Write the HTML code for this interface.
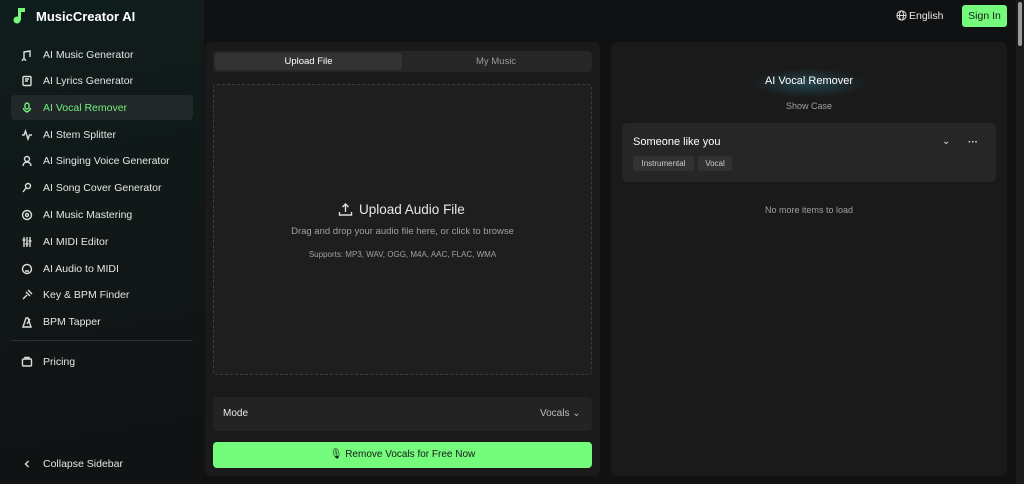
<!DOCTYPE html><html><head><style>
*{margin:0;padding:0;box-sizing:border-box}
body{width:1024px;height:484px;overflow:hidden;background:#101112;font-family:"Liberation Sans",sans-serif;color:#e8e8e8;position:relative}
.side{position:absolute;left:0;top:0;width:204px;height:484px;background:linear-gradient(170deg,#0f1d1c 0%,#111717 50%,#101213 100%)}
.abs{position:absolute}
.nav{position:absolute;left:11px;width:182px;height:25px;font-size:10.5px;color:#e6e6e6;display:flex;align-items:center;padding-left:10px}
.nav svg{width:12px;height:12px;margin-right:10px;stroke:#ddd;fill:none;stroke-width:1.4}
.nav.act{background:#222829;border-radius:4px;color:#6ef07a}
.nav.act svg{stroke:#6ef07a}
.panel{position:absolute;background:#1a1a1a;border-radius:6px}
</style></head><body>
<div class="side"></div>
<svg class="abs" style="left:12px;top:6px" width="16" height="18" viewBox="0 0 16 18"><path d="M6 14V2h7v4H9v8" fill="#74fb7c"/><circle cx="5" cy="14" r="3.5" fill="#74fb7c"/></svg>
<div class="abs" style="left:36px;top:9px;font-size:13px;font-weight:bold;color:#fff">MusicCreator AI</div>
<div class="nav" style="top:42px"><svg viewBox="0 0 12 12"><path d="M3 10V3l6-1v6M3 10a1.5 1.5 0 1 1-.1 0M9 8"/></svg>AI Music Generator</div>
<div class="nav" style="top:68px"><svg viewBox="0 0 12 12"><rect x="2" y="1.5" width="8" height="9" rx="1"/><path d="M4 4h4M4 6h3"/></svg>AI Lyrics Generator</div>
<div class="nav act" style="top:95px"><svg viewBox="0 0 12 12"><rect x="4" y="1" width="4" height="6" rx="2"/><path d="M2.5 6a3.5 3.5 0 0 0 7 0M6 9.5v1.5"/></svg>AI Vocal Remover</div>
<div class="nav" style="top:122px"><svg viewBox="0 0 12 12"><path d="M1 6h2l1.5-4 2.5 8 1.5-4H11"/></svg>AI Stem Splitter</div>
<div class="nav" style="top:148px"><svg viewBox="0 0 12 12"><circle cx="6" cy="4" r="2.5"/><path d="M2 11a4 4 0 0 1 8 0"/></svg>AI Singing Voice Generator</div>
<div class="nav" style="top:175px"><svg viewBox="0 0 12 12"><circle cx="7" cy="4" r="2.5"/><path d="M5 6l-3 4"/></svg>AI Song Cover Generator</div>
<div class="nav" style="top:202px"><svg viewBox="0 0 12 12"><circle cx="6" cy="6" r="4.5"/><circle cx="6" cy="6" r="1.5"/></svg>AI Music Mastering</div>
<div class="nav" style="top:229px"><svg viewBox="0 0 12 12"><path d="M3 1v10M6 1v10M9 1v10M1.5 4h3M4.5 8h3M7.5 5h3"/></svg>AI MIDI Editor</div>
<div class="nav" style="top:256px"><svg viewBox="0 0 12 12"><circle cx="6" cy="6" r="4.5"/><path d="M4 5h.1M8 5h.1M4 8h4"/></svg>AI Audio to MIDI</div>
<div class="nav" style="top:282px"><svg viewBox="0 0 12 12"><path d="M2 10l4-4M5 3l4 4M7 1l4 4"/></svg>Key &amp; BPM Finder</div>
<div class="nav" style="top:309px"><svg viewBox="0 0 12 12"><path d="M2 11l3-9h2l3 9zM6 8l3-5"/></svg>BPM Tapper</div>
<div class="abs" style="left:11px;top:340px;width:182px;height:1px;background:#2a2f30"></div>
<div class="nav" style="top:349px"><svg viewBox="0 0 12 12"><rect x="1.5" y="3" width="9" height="7" rx="1"/><path d="M4 3V1.5h4V3"/></svg>Pricing</div>
<div class="nav" style="top:451px"><svg viewBox="0 0 12 12"><path d="M7.5 3L4.5 6l3 3"/></svg>Collapse Sidebar</div>

<svg class="abs" style="left:896px;top:10px" width="11" height="11" viewBox="0 0 12 12" fill="none" stroke="#ddd" stroke-width="1.1"><circle cx="6" cy="6" r="5"/><ellipse cx="6" cy="6" rx="2.2" ry="5"/><path d="M1 6h10"/></svg>
<div class="abs" style="left:909px;top:10px;font-size:10.5px;color:#e8e8e8">English</div>
<div class="abs" style="left:962px;top:5px;width:45px;height:22px;background:#74fb7c;border-radius:3px;color:#1a1a1a;font-size:10.5px;text-align:center;line-height:22px">Sign In</div>
<div class="abs" style="left:1016px;top:0;width:8px;height:484px;background:#1a1a1a"></div>
<div class="abs" style="left:1018px;top:2px;width:4px;height:44px;background:#9a9a9a;border-radius:2px"></div>

<div class="panel" style="left:205px;top:42px;width:395px;height:434px"></div>
<div class="abs" style="left:213px;top:51px;width:379px;height:21px;background:#262626;border-radius:4px"></div>
<div class="abs" style="left:215px;top:53px;width:187px;height:17px;background:#333;border-radius:3px;font-size:9.5px;text-align:center;line-height:17px;color:#fff">Upload File</div>
<div class="abs" style="left:402px;top:53px;width:188px;height:17px;font-size:9.5px;text-align:center;line-height:17px;color:#9a9a9a">My Music</div>
<div class="abs" style="left:213px;top:84px;width:379px;height:291px;border:1px dashed #3c3c3c;border-radius:4px;background:#1e1e1e"></div>
<svg class="abs" style="left:338px;top:202px" width="15" height="15" viewBox="0 0 15 15" fill="none" stroke="#ddd" stroke-width="1.4"><path d="M7.5 10V2M4.5 5l3-3 3 3M1.5 10v3h12v-3"/></svg>
<div class="abs" style="left:359px;top:202px;font-size:13.5px;color:#e8e8e8">Upload Audio File</div>
<div class="abs" style="left:213px;top:226px;width:379px;text-align:center;font-size:9.5px;color:#a0a0a0">Drag and drop your audio file here, or click to browse</div>
<div class="abs" style="left:213px;top:250px;width:379px;text-align:center;font-size:8px;color:#a0a0a0">Supports: MP3, WAV, OGG, M4A, AAC, FLAC, WMA</div>
<div class="abs" style="left:213px;top:397px;width:379px;height:34px;background:#232323;border-radius:4px"></div>
<div class="abs" style="left:223px;top:408px;font-size:10px;color:#e8e8e8">Mode</div>
<div class="abs" style="left:540px;top:408px;font-size:10px;color:#bbb">Vocals ⌄</div>
<div class="abs" style="left:213px;top:442px;width:379px;height:26px;background:#74fb7c;border-radius:4px;color:#1a1a1a;font-size:10px;text-align:center;line-height:26px">&#127897;&#xFE0E; Remove Vocals for Free Now</div>

<div class="panel" style="left:611px;top:42px;width:396px;height:434px"></div>
<div class="abs" style="left:750px;top:68px;width:118px;height:30px;border-radius:50%;background:radial-gradient(ellipse,rgba(40,110,130,.5),rgba(20,40,60,0) 70%)"></div>
<div class="abs" style="left:611px;top:75px;width:396px;text-align:center;font-size:11px;color:#fff">AI Vocal Remover</div>
<div class="abs" style="left:611px;top:101px;width:396px;text-align:center;font-size:9px;color:#a0a0a0">Show Case</div>
<div class="abs" style="left:622px;top:123px;width:374px;height:59px;background:#262626;border-radius:5px"></div>
<div class="abs" style="left:633px;top:136px;font-size:11px;color:#fff">Someone like you</div>
<div class="abs" style="left:942px;top:136px;font-size:10px;color:#ddd">⌄</div>
<div class="abs" style="left:968px;top:137px;font-size:10px;color:#ddd;font-weight:bold">···</div>
<div class="abs" style="left:633px;top:156px;width:61px;height:15px;background:#323232;border-radius:3px;font-size:8px;line-height:15px;text-align:center;color:#ccc">Instrumental</div>
<div class="abs" style="left:698px;top:156px;width:34px;height:15px;background:#323232;border-radius:3px;font-size:8px;line-height:15px;text-align:center;color:#ccc">Vocal</div>
<div class="abs" style="left:611px;top:205px;width:396px;text-align:center;font-size:9px;color:#a0a0a0">No more items to load</div>
</body></html>
